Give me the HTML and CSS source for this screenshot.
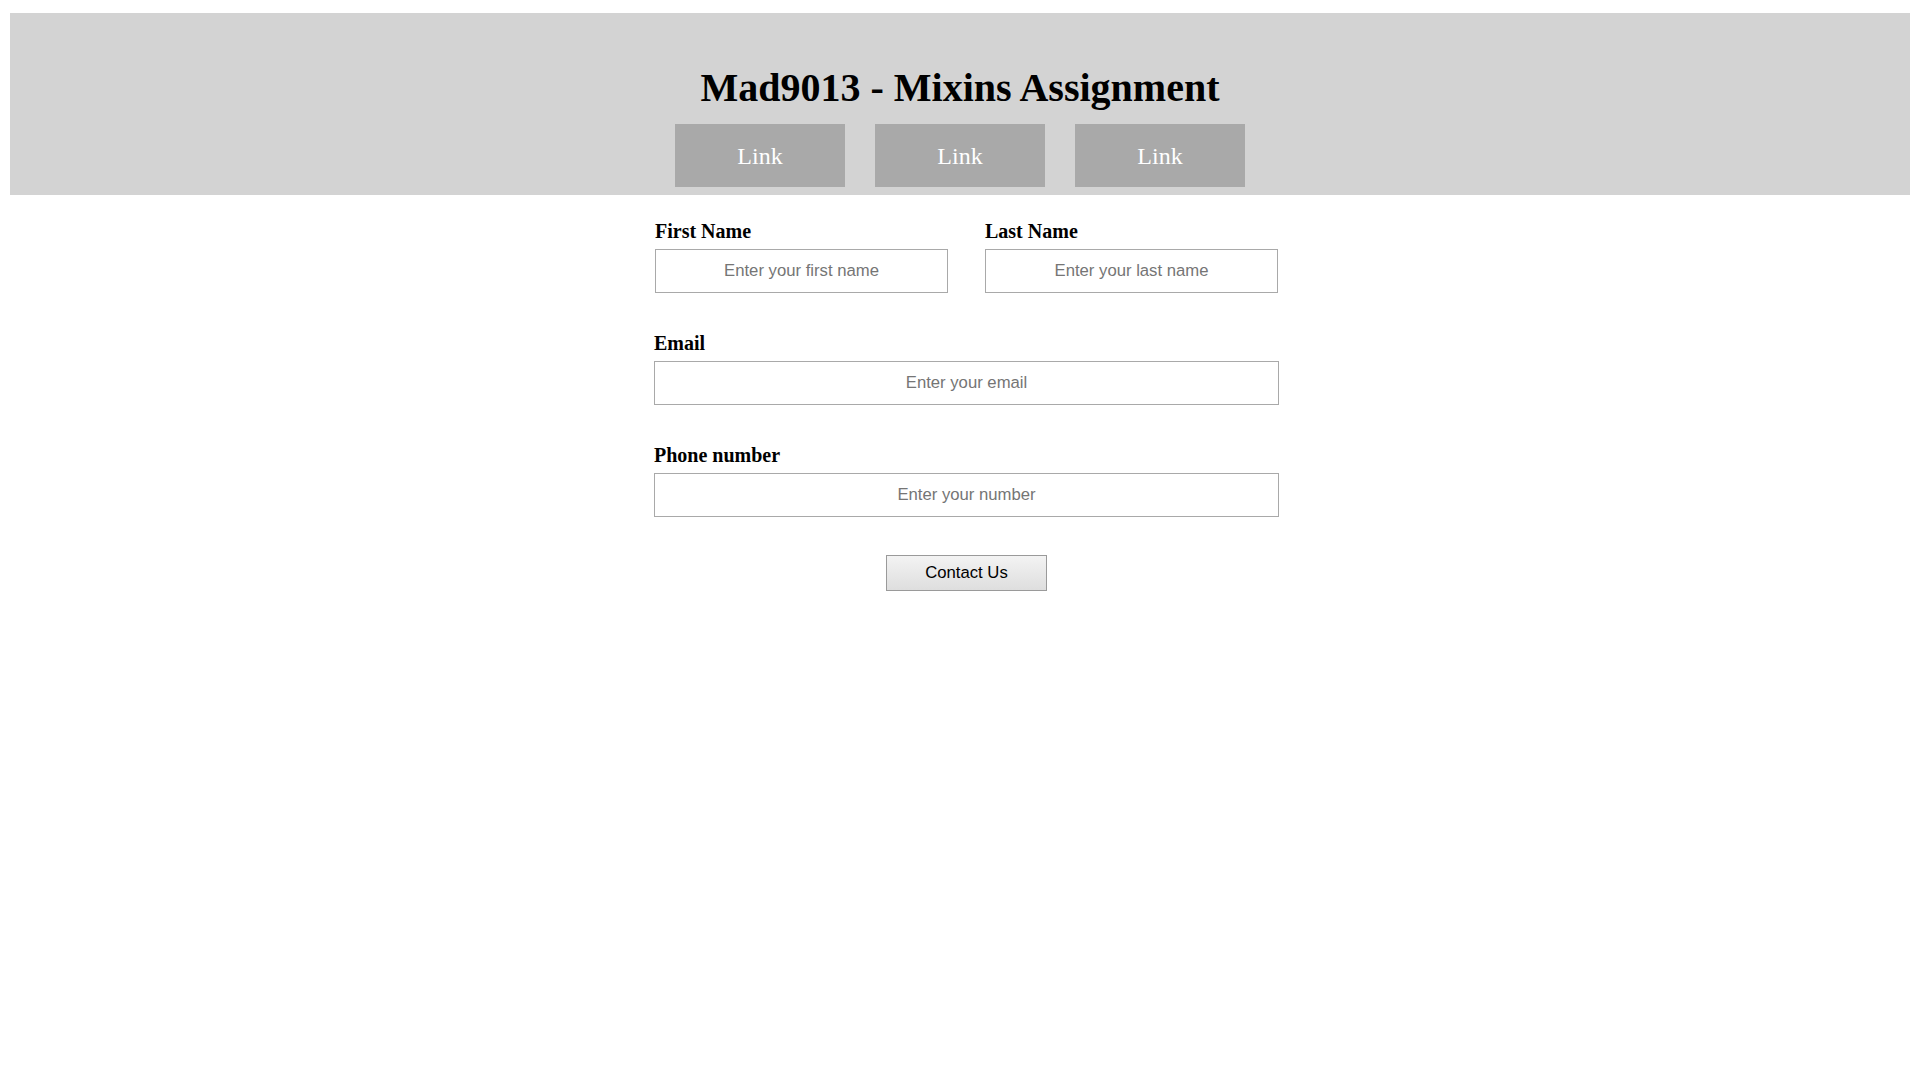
FILE: index.html
```html
<!DOCTYPE html>
<html lang="en">
<head>
<meta charset="utf-8">
<title>Mad9013 - Mixins Assignment</title>
<link rel="stylesheet" href="styles.css">
</head>
<body>
<header class="site-header">
  <h1 class="site-title">Mad9013 - Mixins Assignment</h1>
  <nav class="nav">
    <a class="nav-link" href="#">Link</a>
    <a class="nav-link" href="#">Link</a>
    <a class="nav-link" href="#">Link</a>
  </nav>
</header>
<main class="main">
  <form class="contact-form">
    <div class="row">
      <div class="field">
        <label class="label" for="first">First Name</label>
        <input class="input" id="first" type="text" placeholder="Enter your first name">
      </div>
      <div class="field">
        <label class="label" for="last">Last Name</label>
        <input class="input" id="last" type="text" placeholder="Enter your last name">
      </div>
    </div>
    <div class="field">
      <label class="label" for="email">Email</label>
      <input class="input" id="email" type="email" placeholder="Enter your email">
    </div>
    <div class="field">
      <label class="label" for="phone">Phone number</label>
      <input class="input" id="phone" type="tel" placeholder="Enter your number">
    </div>
    <div class="actions">
      <button class="submit" type="button">Contact Us</button>
    </div>
  </form>
</main>
</body>
</html>
```

FILE: styles.css
```css
html, body {
  margin: 0;
  padding: 0;
  background: #ffffff;
}

body {
  font-family: "Liberation Serif", "Times New Roman", serif;
  color: #000;
}

.site-header {
  margin: 13px 10px 0;
  background: #d3d3d3;
  padding: 52px 0 8px;
  display: flex;
  flex-direction: column;
  align-items: center;
}

.site-title {
  margin: 0;
  font-size: 40px;
  line-height: 45px;
  font-weight: bold;
}

.nav {
  margin-top: 14px;
  display: flex;
  gap: 30px;
}

.nav-link {
  display: block;
  width: 170px;
  height: 63px;
  line-height: 65px;
  text-align: center;
  background: #a9a9a9;
  color: #ffffff;
  font-size: 24px;
  text-decoration: none;
}

.main {
  padding: 24px 0 0 13px;
}

.contact-form {
  width: 625px;
  margin: 0 auto;
  display: flex;
  flex-direction: column;
  gap: 38px;
}

.row {
  display: flex;
  gap: 37px;
  padding-left: 1px;
}

.row .field {
  width: 293px;
}

.field {
  display: flex;
  flex-direction: column;
  gap: 6px;
}

.label {
  font-size: 20px;
  line-height: 24px;
  font-weight: bold;
}

.input {
  box-sizing: border-box;
  width: 100%;
  height: 44px;
  margin: 0;
  border: 1px solid #a9a9a9;
  background: #fff;
  text-align: center;
  font-family: "Liberation Sans", Arial, sans-serif;
  font-size: 16.7px;
  color: #000;
  outline: none;
}

.input::placeholder {
  color: #757575;
  opacity: 1;
}

.actions {
  display: flex;
  justify-content: center;
}

.submit {
  box-sizing: border-box;
  width: 161px;
  height: 36px;
  margin: 0;
  border: 1px solid #9a9a9a;
  border-radius: 0;
  background: linear-gradient(#f3f3f3, #dedede);
  font-family: "Liberation Sans", Arial, sans-serif;
  font-size: 16.7px;
  color: #000;
  cursor: pointer;
}
```
